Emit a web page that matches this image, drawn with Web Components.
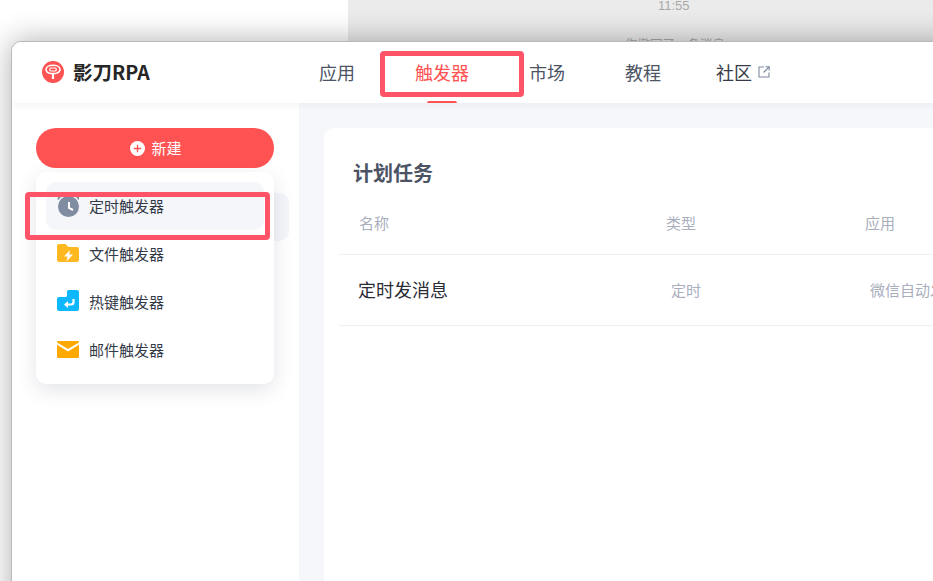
<!doctype html>
<html lang="zh">
<head>
<meta charset="utf-8">
<title>影刀RPA</title>
<style>
  html, body { margin: 0; padding: 0; width: 933px; height: 581px; overflow: hidden; background: #fff; }
  body { font-family: "Noto Sans CJK SC", "Noto Sans", sans-serif; }
</style>
</head>
<body>
<rpa-desktop>
  <rpa-window>
    <rpa-header slot="header">
      <nav-item>应用</nav-item>
      <nav-item active>触发器</nav-item>
      <nav-item>市场</nav-item>
      <nav-item>教程</nav-item>
      <nav-item external>社区</nav-item>
    </rpa-header>
    <rpa-sidebar slot="sidebar">
      <menu-item active label="定时触发器">
        <svg slot="icon" width="22" height="24" viewBox="0 0 22 24">
          <path d="M1 5.500 Q3 1 7 1" fill="none" stroke="#7f8ca2" stroke-width="1.800"/>
          <path d="M22 5.500 Q20 1 16 1" fill="none" stroke="#7f8ca2" stroke-width="1.800"/>
          <circle cx="11.500" cy="12.500" r="10.500" fill="#7f8ca2"/>
          <path d="M12 8V14L16 16" fill="none" stroke="#fff" stroke-width="2"/>
        </svg>
      </menu-item>
      <menu-item label="文件触发器">
        <svg slot="icon" width="22" height="24" viewBox="0 0 22 24">
          <path d="M0 4a2 2 0 0 1 2-2h6.500l3 3H20a2 2 0 0 1 2 2v11a2 2 0 0 1-2 2H2a2 2 0 0 1-2-2Z" fill="#ffb81f"/>
          <path d="M13 8 7 14.500h3.500L9.500 19.500 16 12.500h-3.800Z" fill="#fff"/>
        </svg>
      </menu-item>
      <menu-item label="热键触发器">
        <svg slot="icon" width="22" height="24" viewBox="0 0 22 24">
          <path d="M10 1.500A1.500 1.500 0 0 1 11.500 0H20a2 2 0 0 1 2 2v17a2 2 0 0 1-2 2H2a2 2 0 0 1-2-2V9a2 2 0 0 1 2-2h6.500A1.500 1.500 0 0 0 10 5.500Z" fill="#0db8ff"/>
          <path d="M16.500 9v3a2.500 2.500 0 0 1-2.500 2.500H9.500" fill="none" stroke="#fff" stroke-width="2.200"/>
          <path d="M11 11 7 14.500l4 3.500Z" fill="#fff"/>
        </svg>
      </menu-item>
      <menu-item label="邮件触发器">
        <svg slot="icon" width="22" height="24" viewBox="0 0 22 24">
          <path d="M0 4a1 1 0 0 1 1-1h20a1 1 0 0 1 1 1v.5L11 11 0 4.500Z" fill="#ffa800"/>
          <path d="M0 6.800 11 13.500 22 6.800V18.500a1.500 1.500 0 0 1-1.500 1.500H1.500A1.500 1.500 0 0 1 0 18.500Z" fill="#ffa800"/>
        </svg>
      </menu-item>
    </rpa-sidebar>
    <task-card slot="main" title="计划任务">
      <task-row head name="名称" type="类型" app="应用"></task-row>
      <task-row name="定时发消息" type="定时" app="微信自动发消息"></task-row>
    </task-card>
  </rpa-window>
</rpa-desktop>

<script>
function el(name, html, props){
  const template = document.createElement('template');
  template.innerHTML = html;
  class Element extends HTMLElement {
    constructor(){
      super();
      this.attachShadow({ mode: 'open' });
      this.shadowRoot.appendChild(template.content.cloneNode(true));
    }
    connectedCallback(){
      if(props) props(this, this.shadowRoot);
    }
  }
  customElements.define(name, Element);
}

el('rpa-desktop', `
  <style>
    :host{display:block;position:relative;width:933px;height:581px;overflow:hidden;background:#fff;}
    #chat{position:absolute;left:348px;top:0;right:0;bottom:0;background:#ebebeb;text-align:center;font-size:13px;color:#a8a8a8;}
    #time{position:absolute;left:310px;top:0;font:13px/11px "Liberation Sans",sans-serif;}
    #notice{position:absolute;left:277px;top:34px;line-height:20px;font-size:12.500px;white-space:nowrap;}
  </style>
  <div id="chat"><div id="time">11:55</div><div id="notice">你撤回了一条消息</div></div>
  <slot></slot>
`);

el('rpa-window', `
  <style>
    :host{display:block;position:absolute;left:11px;top:41px;width:960px;height:600px;box-sizing:border-box;
      background:#f6f7fb;border:1px solid #b9b9b9;border-radius:10px 0 0 0;
      box-shadow:0 0 30px rgba(0,0,0,.32);}
    #clip{width:100%;height:100%;border-radius:9px 0 0 0;overflow:hidden;display:grid;grid-template-columns:287px 1fr;grid-template-rows:61px 1fr;}
    ::slotted([slot=header]){grid-column:1 / 3;}
    .mark{position:absolute;z-index:3;box-sizing:border-box;border:5px solid #ff5468;border-radius:4px;pointer-events:none;}
    #m1{left:368px;top:9px;width:144px;height:46px;}
    #m2{left:13px;top:150px;width:245px;height:48px;}
  </style>
  <div id="clip">
    <slot name="header"></slot>
    <slot name="sidebar"></slot>
    <slot name="main"></slot>
  </div>
  <div class="mark" id="m1"></div>
  <div class="mark" id="m2"></div>
`);

el('rpa-header', `
  <style>
    :host{display:flex;align-items:center;position:relative;z-index:2;background:#fff;height:61px;box-shadow:0 2px 8px rgba(30,40,70,.05);}
    #logo{display:flex;align-items:center;gap:9px;width:307px;box-sizing:border-box;padding-left:30px;flex:none;padding-bottom:1px;}
    #brand{font-size:19.500px;font-weight:700;color:#262626;line-height:24px;}
    nav{display:flex;align-items:center;gap:60px;}
  </style>
  <div id="logo">
    <svg width="22" height="22" viewBox="0 0 22 22">
      <circle cx="11" cy="11" r="11" fill="#ff5252"/>
      <path d="M4 8.500C4 6 7 4.300 11 4.300s7 1.700 7 4.200-2.500 3.500-4.500 4h-5c-2-.5-4.500-1.500-4.500-4Z" fill="none" stroke="#fff" stroke-width="1.600"/>
      <rect x="7.800" y="7" width="6.400" height="3" rx="1" fill="none" stroke="#fff" stroke-width="1.200"/>
      <path d="M11 12.500V18" stroke="#fff" stroke-width="2.200"/>
    </svg>
    <span id="brand">影刀RPA</span>
  </div>
  <nav><slot></slot></nav>
`);

el('nav-item', `
  <style>
    :host{display:flex;align-items:center;position:relative;height:59px;padding-bottom:2px;font-size:18px;color:#4c5466;line-height:24px;white-space:nowrap;}
    :host([active]){color:#ff5252;}
    :host([external]){margin-left:-5px;color:#363b47;}
    #bar{display:none;position:absolute;left:12px;bottom:0;width:30px;height:2px;border-radius:3px 3px 0 0;background:#ff5252;}
    :host([active]) #bar{display:block;}
    svg{display:none;margin-left:6px;}
    :host([external]) svg{display:block;}
  </style>
  <slot></slot>
  <svg width="12" height="12" viewBox="0 0 12 12" fill="none" stroke="#7d8aa0" stroke-width="1.100">
    <path d="M6 1H1v10h10V6.500"/><path d="M5.500 6.500 11 1M7.500 .8H11.200V4.500"/>
  </svg>
  <div id="bar"></div>
`);

el('rpa-sidebar', `
  <style>
    :host{display:block;position:relative;background:#fff;height:100%;}
    #new{display:flex;align-items:center;justify-content:center;gap:6px;margin:25px 0 0 24px;width:238px;height:40px;padding-left:2px;box-sizing:border-box;border-radius:20px;background:#ff5252;color:#fff;font-size:15px;line-height:20px;}
    #under{margin:25px 10px 0 24px;height:48px;border-radius:10px;background:#f5f6fa;}
    #menu{position:absolute;left:24px;top:69px;width:238px;box-sizing:border-box;padding:10px;background:#fff;border-radius:10px;box-shadow:0 6px 20px rgba(40,50,80,.13);}
  </style>
  <div id="new">
    <svg width="15" height="15" viewBox="0 0 15 15"><circle cx="7.500" cy="7.500" r="7.500" fill="#fff"/><path d="M7.500 3.800v7.400M3.800 7.500h7.400" stroke="#ff5252" stroke-width="1.300"/></svg>
    <span>新建</span>
  </div>
  <div id="under"></div>
  <div id="menu"><slot></slot></div>
`);

el('menu-item', `
  <style>
    :host{display:flex;align-items:center;height:48px;padding-left:11px;gap:10px;border-radius:10px;font-size:15px;color:#333a47;line-height:20px;}
    :host([active]){background:#f5f6fa;}
    #ic{display:flex;flex:none;width:22px;height:24px;}
  </style>
  <div id="ic"><slot name="icon"></slot></div>
  <span id="label"></span>
`, (host, root) => {
  root.getElementById('label').textContent = host.getAttribute('label');
});

el('task-card', `
  <style>
    :host{display:block;margin:25px 0 0 25px;height:100%;background:#fff;border-radius:10px 0 0 0;padding:30px 0 0 15px;box-sizing:border-box;}
    h2{margin:0;padding-left:14px;font-size:20px;font-weight:700;color:#4b5364;line-height:30px;}
    #rows{margin-top:4px;}
  </style>
  <h2 id="title"></h2>
  <div id="rows"><slot></slot></div>
`, (host, root) => {
  root.getElementById('title').textContent = host.getAttribute('title');
  host.removeAttribute('title');
});

el('task-row', `
  <style>
    :host{display:grid;grid-template-columns:327px 199px 1fr;align-items:center;height:68px;padding-bottom:2px;border-bottom:1px solid #eff0f3;font-size:14.500px;color:#a9aebd;white-space:nowrap;overflow:hidden;}
    :host([head]){height:60px;}
    #name{padding-left:19px;font-size:18px;color:#2a2d35;}
    #type,#app{padding-left:5px;font-size:15px;}
    :host([head]) #name{padding-left:20px;font-size:15px;color:#a9aebd;}
    :host([head]) #type,:host([head]) #app{padding-left:0;}
  </style>
  <div id="name"></div><div id="type"></div><div id="app"></div>
`, (host, root) => {
  for(const k of ['name','type','app']) root.getElementById(k).textContent = host.getAttribute(k);
});
</script>
</body>
</html>
